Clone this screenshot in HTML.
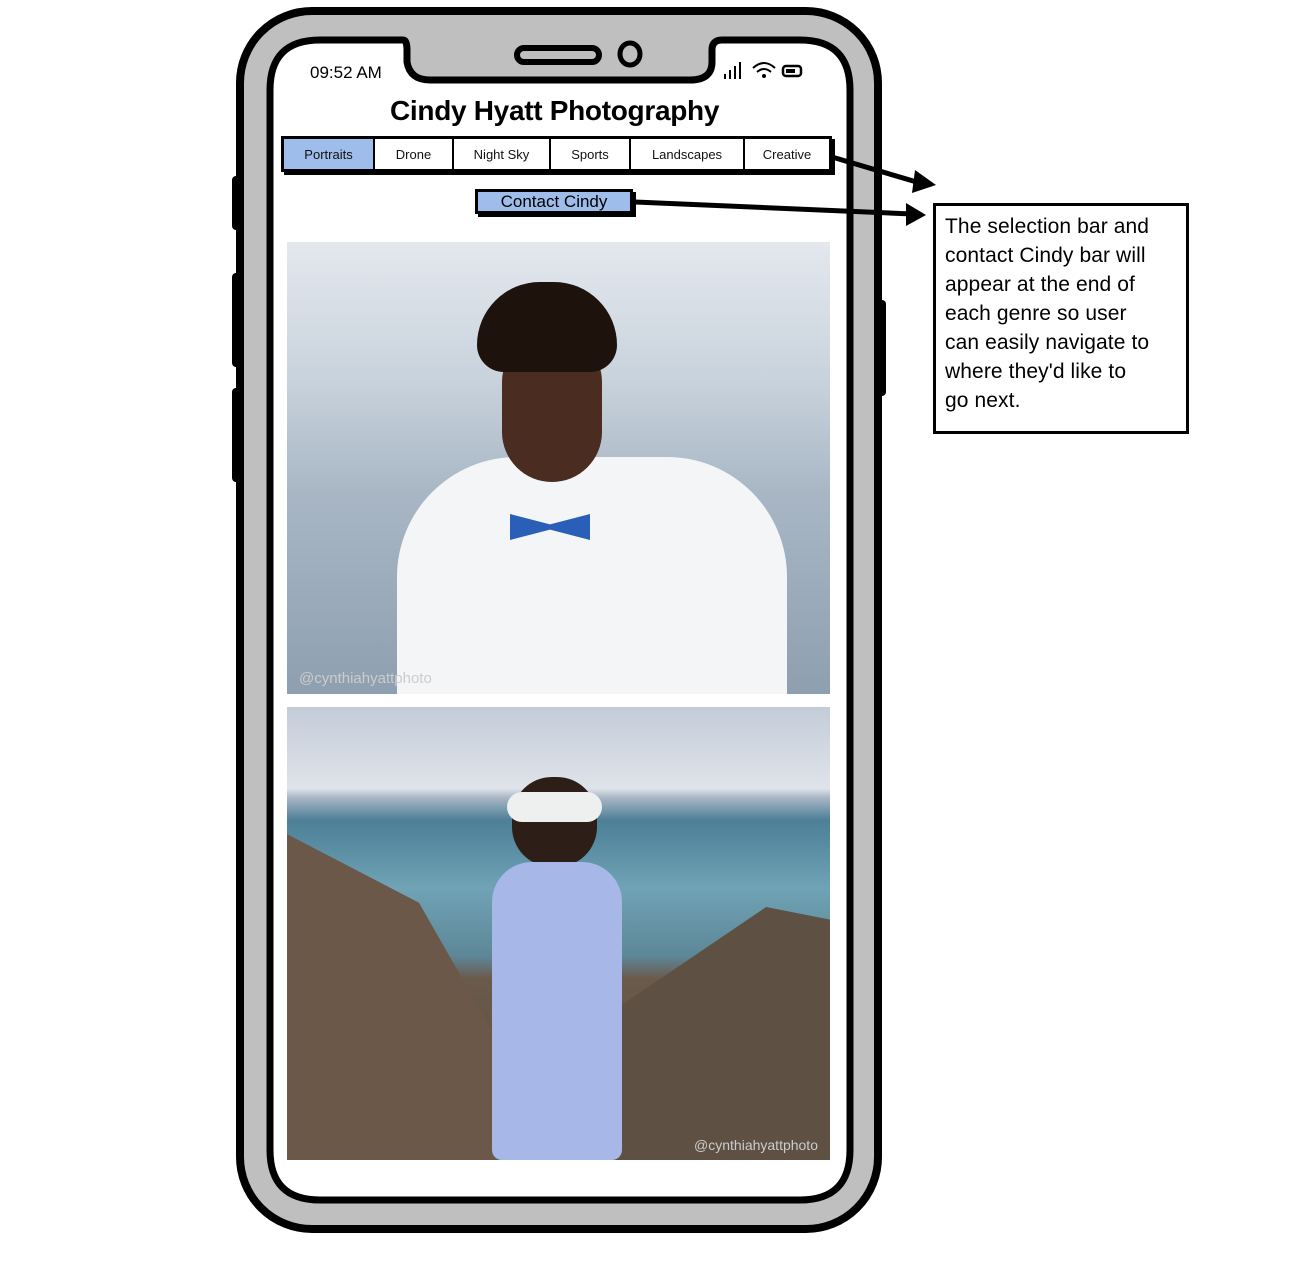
<!DOCTYPE html>
<html><head><meta charset="utf-8"><style>
body{margin:0;width:1306px;height:1287px;background:#fff;position:relative;overflow:hidden;font-family:"Liberation Sans",sans-serif}
.a{position:absolute}
.nav{position:absolute;left:281px;top:136px;width:545px;height:30px;border:3px solid #000;display:flex;box-shadow:3px 3px 0 #000;background:#fff}
.nav div{border-right:2px solid #000;font-size:13px;display:flex;align-items:center;justify-content:center;color:#111}
.nav div:last-child{border-right:none}
</style></head><body>
<svg class="a" style="left:0;top:0" width="1306" height="1287">
<rect x="232" y="176" width="12" height="54" rx="4" fill="#000"/>
<rect x="232" y="273" width="12" height="94" rx="4" fill="#000"/>
<rect x="232" y="388" width="12" height="94" rx="4" fill="#000"/>
<rect x="874" y="300" width="12" height="96" rx="4" fill="#000"/>
<rect x="240" y="11" width="638" height="1218" rx="72" fill="#c0bfc0" stroke="#000" stroke-width="8"/>
<path d="M320 40 H403 Q407 40 407 50 V62 Q410 80 430 80 H690 Q712 80 712 62 V50 Q712 40 722 40 H800 Q850 40 850 90 V1150 Q850 1200 800 1200 H320 Q270 1200 270 1150 V90 Q270 40 320 40 Z" fill="#fff" stroke="#000" stroke-width="7"/>
<rect x="517" y="48" width="82" height="14" rx="7" fill="none" stroke="#000" stroke-width="6"/>
<ellipse cx="630" cy="54" rx="10" ry="11" fill="none" stroke="#000" stroke-width="5"/>
<g fill="#000"><rect x="724" y="74" width="2" height="5"/><rect x="729" y="70" width="2" height="9"/><rect x="734" y="66" width="2" height="13"/><rect x="739" y="62" width="2" height="17"/></g>
<path d="M753 68 Q764 58 775 68 M757 72 Q764 66 771 72" stroke="#000" stroke-width="2" fill="none"/><circle cx="764" cy="76" r="2"/>
<rect x="783" y="66" width="18" height="10" rx="3" fill="none" stroke="#000" stroke-width="2.5"/><rect x="786" y="69" width="9" height="4"/>
<path d="M832 157 L920 183" stroke="#000" stroke-width="5"/><path d="M915 170 L936 185 L912 193 Z"/>
<path d="M635 202 L912 214" stroke="#000" stroke-width="5"/><path d="M906 203 L926 215 L906 226 Z"/>
</svg>
<div class="a" style="left:310px;top:63px;font-size:17px">09:52 AM</div>
<div class="a" style="left:390px;top:95px;font-size:28px;font-weight:bold;letter-spacing:-0.3px">Cindy Hyatt Photography</div>
<div class="nav">
<div style="width:89px;background:#9ebdea">Portraits</div><div style="width:77px">Drone</div><div style="width:95px">Night Sky</div><div style="width:78px">Sports</div><div style="width:112px">Landscapes</div><div style="flex:1">Creative</div></div>
<div class="a" style="left:475px;top:189px;width:152px;height:19px;border:3px solid #000;background:#9ebdea;box-shadow:3px 3px 0 #000;font-size:17px;text-align:center;line-height:19px">Contact Cindy</div>
<div class="a" style="left:287px;top:242px;width:543px;height:452px;overflow:hidden;background:linear-gradient(#e4e8ee 0%,#c9d3dd 30%,#a9b7c5 55%,#8e9fb0 100%)">
<div class="a" style="left:110px;top:215px;width:390px;height:260px;background:#f4f5f7;border-radius:120px 120px 0 0"></div>
<div class="a" style="left:215px;top:90px;width:100px;height:150px;background:#4a2c20;border-radius:50px 50px 50px 50px"></div>
<div class="a" style="left:190px;top:40px;width:140px;height:90px;background:#1e120d;border-radius:70px 70px 30px 30px"></div>
<div class="a" style="left:223px;top:272px;width:80px;height:26px;background:#2a5fb8;clip-path:polygon(0 0,50% 40%,100% 0,100% 100%,50% 60%,0 100%)"></div>
<div class="a" style="left:12px;top:428px;color:#ccc;font-size:15px">@cynthiahyattphoto</div></div>
<div class="a" style="left:287px;top:707px;width:543px;height:453px;overflow:hidden;background:linear-gradient(#c3ccd8 0%,#dfe3ea 18%,#a9b6c5 20%,#4d7f97 25%,#6fa3b5 40%,#5d8797 55%,#6a5a4c 60%,#5c4b3e 100%)">
<div class="a" style="left:0;top:110px;width:220px;height:343px;background:#6b5848;clip-path:polygon(0 5%,60% 25%,100% 70%,100% 100%,0 100%)"></div>
<div class="a" style="left:330px;top:200px;width:213px;height:253px;background:#5f5044;clip-path:polygon(0 40%,70% 0,100% 5%,100% 100%,0 100%)"></div>
<div class="a" style="left:225px;top:70px;width:85px;height:90px;background:#2d1e17;border-radius:40px"></div>
<div class="a" style="left:220px;top:85px;width:95px;height:30px;background:#eef0f0;border-radius:15px"></div>
<div class="a" style="left:205px;top:155px;width:130px;height:298px;background:#a6b7e8;border-radius:40px 40px 10px 10px"></div>
<div class="a" style="right:12px;top:430px;color:#ccc;font-size:14px">@cynthiahyattphoto</div></div>
<div class="a" style="left:933px;top:203px;border:3px solid #000;background:#fff;font-size:21px;line-height:29px;padding:6px 0 0 9px;box-sizing:border-box;width:256px;height:231px;white-space:nowrap;letter-spacing:0.1px">The selection bar and<br>contact Cindy bar will<br>appear at the end of<br>each genre so user<br>can easily navigate to<br>where they'd like to<br>go next.</div>
</body></html>
